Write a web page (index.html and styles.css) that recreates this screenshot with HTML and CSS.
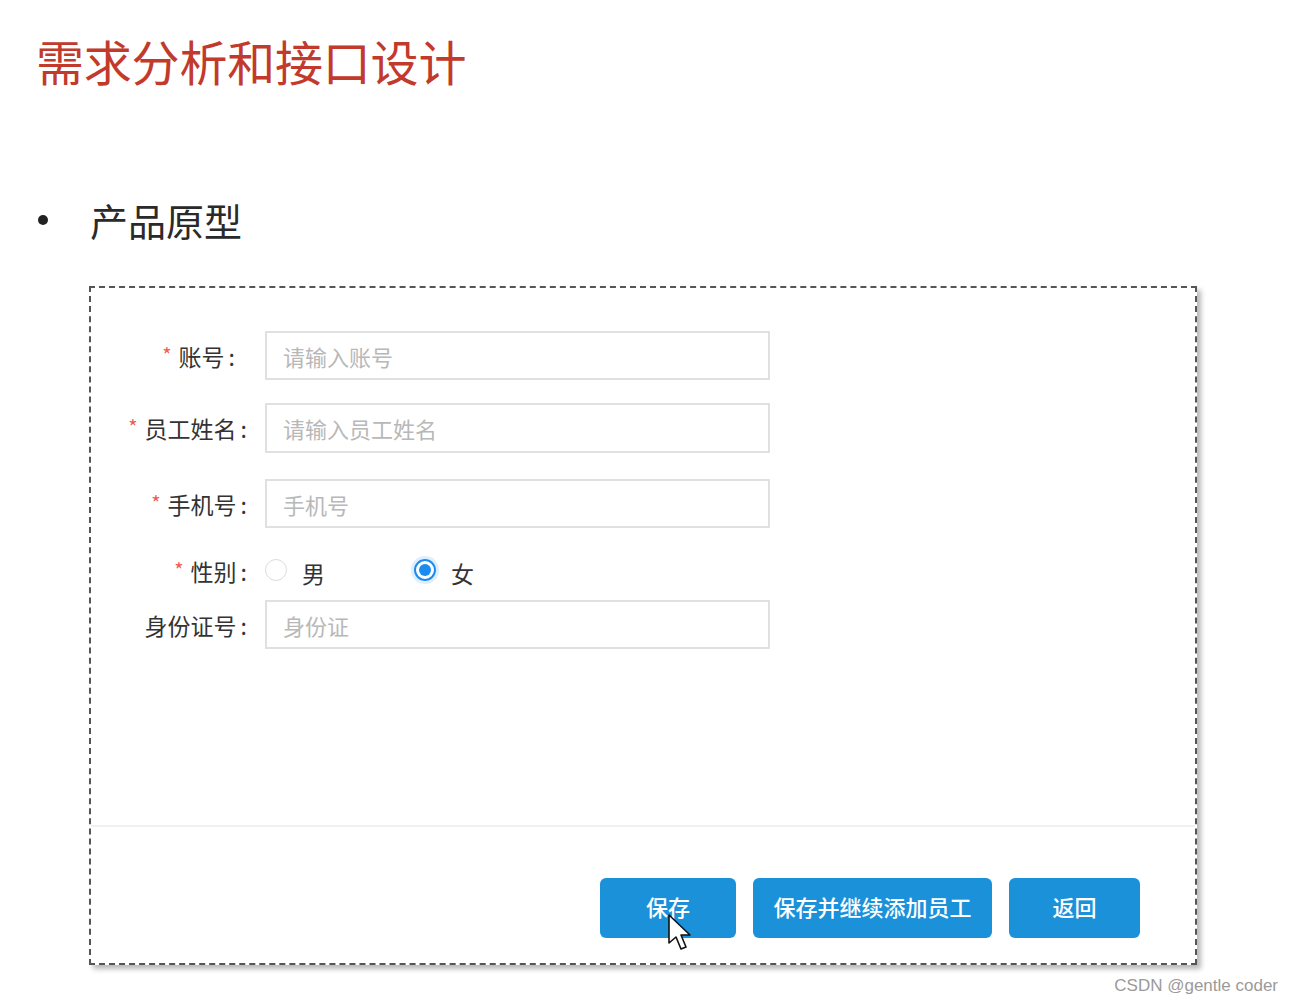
FILE: index.html
```html
<!DOCTYPE html>
<html lang="zh-CN">
<head>
<meta charset="utf-8">
<title>需求分析和接口设计</title>
<link rel="stylesheet" href="styles.css">
</head>
<body>
<h1 class="title">需求分析和接口设计</h1>
<div class="section">
  <span class="bullet"></span>
  <h2 class="section-title">产品原型</h2>
</div>
<div class="proto">
  <div class="form">
    <div class="row row-1">
      <label class="label label-short"><span class="req">*</span>账号<span class="colon">:</span></label>
      <div class="input"><span class="ph">请输入账号</span></div>
    </div>
    <div class="row row-2">
      <label class="label"><span class="req">*</span>员工姓名<span class="colon">:</span></label>
      <div class="input"><span class="ph">请输入员工姓名</span></div>
    </div>
    <div class="row row-3">
      <label class="label"><span class="req">*</span>手机号<span class="colon">:</span></label>
      <div class="input"><span class="ph">手机号</span></div>
    </div>
    <div class="row row-gender">
      <label class="label"><span class="req">*</span>性别<span class="colon">:</span></label>
      <div class="radios">
        <span class="radio"></span><span class="radio-text">男</span>
        <span class="radio checked"><span class="dot"></span></span><span class="radio-text">女</span>
      </div>
    </div>
    <div class="row row-id">
      <label class="label">身份证号<span class="colon">:</span></label>
      <div class="input"><span class="ph">身份证</span></div>
    </div>
  </div>
  <div class="sep"></div>
  <div class="footer">
    <button class="btn btn-save">保存
      <svg class="cursor" width="26" height="38" viewBox="0 0 26 38"><path d="M2 2 L2 30 L9 24 L14 36 L19 34 L14 22 L23 22 Z" fill="#fff" stroke="#111" stroke-width="1.6" stroke-linejoin="round"/></svg>
    </button>
    <button class="btn btn-cont">保存并继续添加员工</button>
    <button class="btn btn-back">返回</button>
  </div>
</div>
<div class="watermark">CSDN @gentle coder</div>
</body>
</html>
```
FILE: styles.css
```css
html, body {
  margin: 0;
  padding: 0;
  background: #fff;
}
body {
  font-family: "Noto Sans CJK SC", "Noto Sans", sans-serif;
  width: 1294px;
  height: 1005px;
  position: relative;
  overflow: hidden;
}
.title {
  margin: 0;
  padding: 36px 0 0 36px;
  font-size: 48px;
  line-height: 48px;
  font-weight: 400;
  color: #c23a2b;
  letter-spacing: -0.2px;
}
.section {
  display: flex;
  align-items: center;
  margin-top: 117px;
  padding-left: 38px;
  height: 38px;
}
.bullet {
  width: 10px;
  height: 10px;
  border-radius: 50%;
  background: #222;
  margin-right: 42px;
}
.section-title {
  margin: 0;
  font-size: 38px;
  line-height: 38px;
  font-weight: 400;
  color: #2a2a2a;
}
.proto {
  margin: 47px 0 0 89px;
  width: 1108px;
  height: 679px;
  box-sizing: border-box;
  border: 2px dashed #555;
  box-shadow: 4px 4px 5px rgba(0, 0, 0, 0.28);
  display: flex;
  flex-direction: column;
}
.form {
  height: 537px;
  box-sizing: border-box;
  padding-top: 43px;
}
.row {
  display: flex;
  align-items: center;
}
.row-1 { height: 49px; }
.row-2 { height: 50px; margin-top: 23px; }
.row-3 { height: 49px; margin-top: 26px; }
.row-gender { height: 30px; margin-top: 28px; }
.row-id { height: 49px; margin-top: 14px; }
.label {
  width: 158px;
  box-sizing: border-box;
  padding-right: 2px;
  text-align: right;
  font-size: 23px;
  color: #333;
  flex: none;
  white-space: nowrap;
}
.label-short {
  padding-right: 14px;
}
.colon {
  margin-left: 4px;
}
.req {
  color: #f25c4c;
  font-size: 20px;
  margin-right: 7px;
  vertical-align: 3px;
}
.input {
  margin-left: 16px;
  width: 505px;
  height: 100%;
  box-sizing: border-box;
  border: 2px solid #e0e0e0;
  display: flex;
  align-items: center;
  padding-left: 16px;
}
.ph {
  font-size: 22px;
  color: #b8b8b8;
}
.radios {
  margin-left: 16px;
  display: flex;
  align-items: center;
}
.radio {
  width: 22px;
  height: 22px;
  box-sizing: border-box;
  border: 1.5px solid #dcdcdc;
  border-radius: 50%;
  display: flex;
  align-items: center;
  justify-content: center;
  margin-top: -2px;
}
.radio.checked {
  border: 2px solid #1a8cf0;
  box-shadow: 0 0 0 3px rgba(26, 140, 240, 0.15);
}
.dot {
  width: 12px;
  height: 12px;
  border-radius: 50%;
  background: #1a8cf0;
}
.radio-text {
  font-size: 23px;
  color: #333;
  margin-left: 15px;
  margin-top: 4px;
}
.radio-text:nth-child(2) {
  margin-right: 89px;
}
.sep {
  height: 2px;
  background: #f0f0f0;
}
.footer {
  flex: 1;
  display: flex;
  justify-content: flex-end;
  align-items: flex-start;
  padding: 51px 55px 0 0;
  gap: 17px;
}
.btn {
  height: 60px;
  border: none;
  border-radius: 6px;
  background: #1b91da;
  color: #fff;
  font-family: "Noto Sans CJK SC", sans-serif;
  font-size: 22px;
  font-weight: 500;
  padding: 0 0 5px;
  position: relative;
}
.btn-save { width: 136px; }
.btn-cont { width: 239px; }
.btn-back { width: 131px; }
.cursor {
  position: absolute;
  left: 67px;
  top: 35px;
}
.watermark {
  position: absolute;
  right: 16px;
  bottom: 9px;
  font-family: "Liberation Sans", Arial, sans-serif;
  font-size: 17px;
  color: #9a9a9a;
}
```
